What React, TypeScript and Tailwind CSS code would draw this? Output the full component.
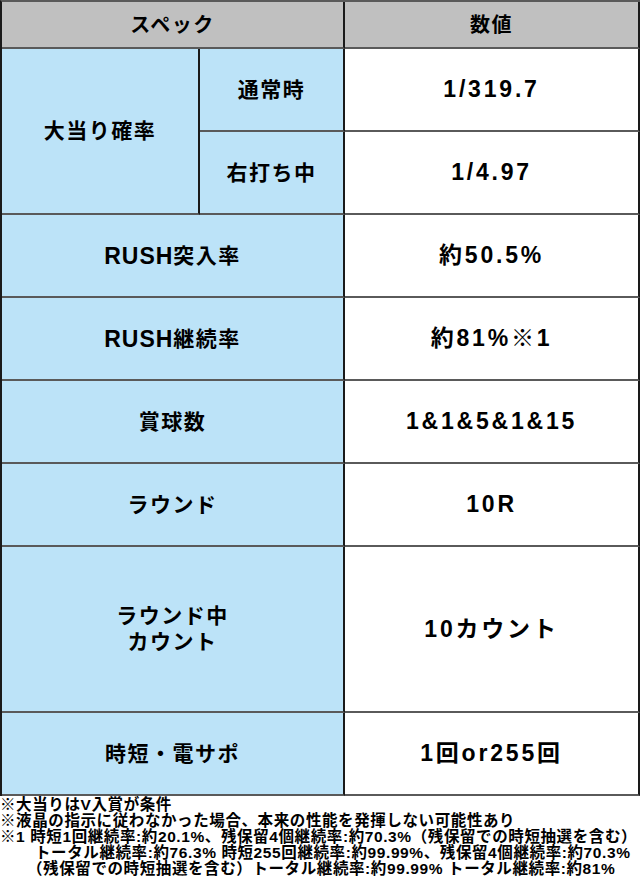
import React from "react";

const font = { fontFamily: '"Liberation Sans", "Noto Sans CJK JP", sans-serif' };

// horizontal lines are grey, vertical ones black
const cell =
  "flex items-center justify-center text-center border-b-2 border-r-2 border-b-[#5a5a5a] border-r-[#1a1a1a]";

const rush = <span className="text-[23px] tracking-[1px]">RUSH</span>;

const rows: { label: React.ReactNode; value: string }[] = [
  { label: <>{rush}突入率</>, value: "約50.5%" },
  { label: <>{rush}継続率</>, value: "約81%※1" },
  { label: "賞球数", value: "1&1&5&1&15" },
  { label: "ラウンド", value: "10R" },
  {
    label: (
      <>
        ラウンド中
        <br />
        カウント
      </>
    ),
    value: "10カウント",
  },
  { label: "時短・電サポ", value: "1回or255回" },
];

const val = "bg-white text-[23px] tracking-[2.8px]";

export default function App() {
  return (
    <div className="w-[640px] h-[876px] bg-white text-black font-bold" style={font}>
      <div className="grid grid-cols-[198px_145px_1fr] grid-rows-[47px_83px_83px_83px_83px_83px_83px_166px_83px] border-l-2 border-t-2 border-l-[#1a1a1a] border-t-[#5a5a5a] text-[21px] tracking-[1.5px]">
        <div className={`${cell} col-span-2 bg-[#c0c0c0] text-[20px]`}>スペック</div>
        <div className={`${cell} bg-[#c0c0c0] text-[20px]`}>数値</div>

        <div className={`${cell} row-span-2 bg-[#bce3f8]`}>大当り確率</div>
        <div className={`${cell} bg-[#bce3f8]`}>通常時</div>
        <div className={`${cell} ${val}`}>1/319.7</div>
        <div className={`${cell} bg-[#bce3f8]`}>右打ち中</div>
        <div className={`${cell} ${val}`}>1/4.97</div>

        {rows.map((r, i) => (
          <React.Fragment key={i}>
            <div className={`${cell} col-span-2 bg-[#bce3f8] leading-[26px]`}>{r.label}</div>
            <div className={`${cell} ${val}`}>{r.value}</div>
          </React.Fragment>
        ))}
      </div>

      <div className="pt-[1px] text-[15.5px] leading-[16px] tracking-[0.6px] whitespace-nowrap">
        <p>※大当りはV入賞が条件</p>
        <p>※液晶の指示に従わなかった場合、本来の性能を発揮しない可能性あり</p>
        <p>※1 時短1回継続率:約20.1%、残保留4個継続率:約70.3%（残保留での時短抽選を含む）</p>
        <p className="pl-[35px]">トータル継続率:約76.3% 時短255回継続率:約99.99%、残保留4個継続率:約70.3%</p>
        <p className="pl-[27px]">（残保留での時短抽選を含む）トータル継続率:約99.99% トータル継続率:約81%</p>
      </div>
    </div>
  );
}
